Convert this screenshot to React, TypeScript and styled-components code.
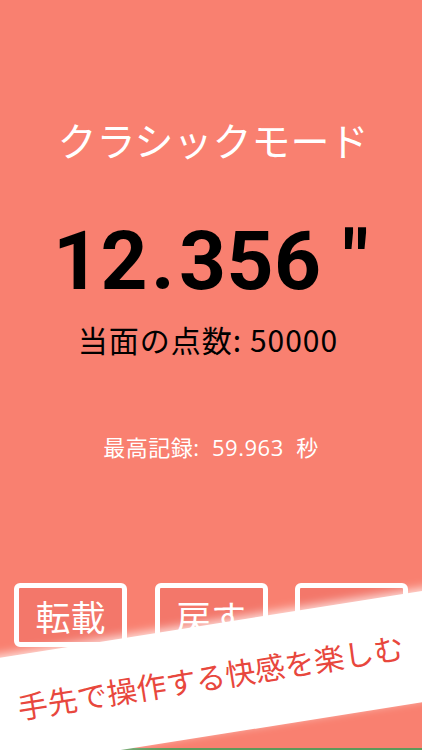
import React from 'react'
import styled, { createGlobalStyle } from 'styled-components'

const GlobalStyle = createGlobalStyle`
    html, body {
        margin: 0;
        padding: 0;
        background: #f98070;
    }
`

const Screen = styled.main`
    position: relative;
    width: 422px;
    height: 750px;
    overflow: hidden;
    background: #f98070;
    display: flex;
    flex-direction: column;
    align-items: center;
    padding-top: 120px;
    box-sizing: border-box;
    font-family: "Noto Sans CJK JP", "Noto Sans", sans-serif;
`
const Title = styled.h1`
    margin: 0;
    font-size: 39px;
    line-height: 1;
    font-weight: 400;
    color: #ffffff;
    padding-left: 4px;
`
const Timer = styled.div`
    margin-top: 61px;
    font-family: Roboto, "Liberation Sans", sans-serif;
    font-weight: 700;
    font-size: 82px;
    line-height: 1;
    letter-spacing: 0.5px;
    color: #000000;
    white-space: pre;
`
const Dot = styled.span`
    letter-spacing: 4px;
    margin-left: 3px;
`
const Score = styled.div`
    margin-top: 22px;
    font-size: 30px;
    line-height: 1;
    letter-spacing: 1px;
    color: #000000;
    padding-right: 6px;
`
const Record = styled.div`
    margin-top: 82px;
    font-family: "Open Sans", "Noto Sans CJK JP", sans-serif;
    font-size: 22px;
    line-height: 1;
    letter-spacing: 0.5px;
    color: #ffffff;
    white-space: pre;
`
const ButtonRow = styled.div`
    margin-top: auto;
    margin-bottom: 101px;
    width: 100%;
    padding: 0 14px;
    box-sizing: border-box;
    display: flex;
    justify-content: space-between;
`
const MenuButton = styled.button`
    width: 113px;
    height: 64px;
    box-sizing: border-box;
    border: 5px solid #ffffff;
    border-radius: 6px;
    background: #f3776a;
    color: #ffffff;
    font-family: "Noto Sans CJK JP", sans-serif;
    font-size: 35px;
    line-height: 1;
    padding: 0;
    display: flex;
    align-items: center;
    justify-content: center;
`
const Footer = styled.div`
    width: 100%;
    height: 2px;
    background: #5e9a5a;
`
const Banner = styled.div`
    position: absolute;
    left: -89px;
    top: 625px;
    width: 600px;
    height: 110px;
    background: #ffffff;
    transform: rotate(-9deg);
    box-shadow: 0 -3px 10px rgba(255, 255, 255, 0.75);
    display: flex;
    align-items: center;
    justify-content: center;
`
const BannerText = styled.span`
    font-size: 30px;
    line-height: 1;
    color: #e8473d;
    margin-top: -8px;
`

export default function App() {
    return (
        <>
            <GlobalStyle />
            <Screen>
                <Title>クラシックモード</Title>
                <Timer>12<Dot>.</Dot>356 "</Timer>
                <Score>当面の点数: 50000</Score>
                <Record>最高記録:  59.963  秒</Record>
                <ButtonRow>
                    <MenuButton>転載</MenuButton>
                    <MenuButton>戻す</MenuButton>
                    <MenuButton></MenuButton>
                </ButtonRow>
                <Footer />
                <Banner>
                    <BannerText>手先で操作する快感を楽しむ</BannerText>
                </Banner>
            </Screen>
        </>
    )
}
